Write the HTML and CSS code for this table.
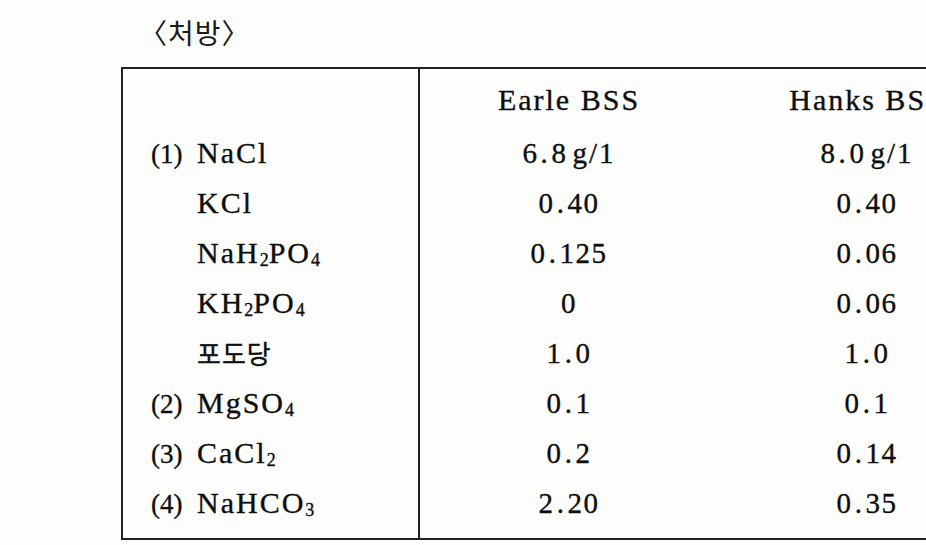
FILE: index.html
```html
<!DOCTYPE html>
<html lang="ko">

<head>
    <meta charset="UTF-8">
    <meta name="viewport" content="width=device-width, initial-scale=1.0">
    <title>처방</title>
    <link rel="stylesheet" href="styles.css">
</head>

<body>
    <div class="page">
        <div class="title">〈처방〉</div>

        <div class="recipe">
            <div class="col names">
                <div class="cell head"></div>
                <div class="cell label"><span class="num">(1)</span><span class="name">NaCl</span></div>
                <div class="cell label"><span class="num"></span><span class="name">KCl</span></div>
                <div class="cell label"><span class="num"></span><span class="name">NaH<sub>2</sub>PO<sub>4</sub></span></div>
                <div class="cell label"><span class="num"></span><span class="name">KH<sub>2</sub>PO<sub>4</sub></span></div>
                <div class="cell label"><span class="num"></span><span class="name ko">포도당</span></div>
                <div class="cell label"><span class="num">(2)</span><span class="name">MgSO<sub>4</sub></span></div>
                <div class="cell label"><span class="num">(3)</span><span class="name">CaCl<sub>2</sub></span></div>
                <div class="cell label"><span class="num">(4)</span><span class="name">NaHCO<sub>3</sub></span></div>
            </div>

            <div class="col values">
                <div class="cell head">Earle BSS</div>
                <div class="cell val">6<span class="dot">.</span>8<span class="unit">g/1</span></div>
                <div class="cell val">0<span class="dot">.</span>40</div>
                <div class="cell val">0<span class="dot">.</span>125</div>
                <div class="cell val">0</div>
                <div class="cell val">1<span class="dot">.</span>0</div>
                <div class="cell val">0<span class="dot">.</span>1</div>
                <div class="cell val">0<span class="dot">.</span>2</div>
                <div class="cell val">2<span class="dot">.</span>20</div>
            </div>

            <div class="col values">
                <div class="cell head">Hanks BSS</div>
                <div class="cell val">8<span class="dot">.</span>0<span class="unit">g/1</span></div>
                <div class="cell val">0<span class="dot">.</span>40</div>
                <div class="cell val">0<span class="dot">.</span>06</div>
                <div class="cell val">0<span class="dot">.</span>06</div>
                <div class="cell val">1<span class="dot">.</span>0</div>
                <div class="cell val">0<span class="dot">.</span>1</div>
                <div class="cell val">0<span class="dot">.</span>14</div>
                <div class="cell val">0<span class="dot">.</span>35</div>
            </div>
        </div>
    </div>
</body>

</html>
```

FILE: styles.css
```css
/* 스캔한 교재 페이지 느낌 */
html,
body {
    margin: 0;
    padding: 0;
    overflow: hidden;
    background: #fdfdfc;
}

body {
    font-family: "Liberation Serif", "Noto Sans CJK KR", serif;
    color: #0e0e0e;
    -webkit-text-stroke: 0.35px #0e0e0e;
}

.page {
    width: 1100px;
    padding-top: 12px;
}

.title {
    font-family: "Noto Sans CJK KR", sans-serif;
    font-size: 28px;
    line-height: 40px;
    margin-left: 139px;
    letter-spacing: 1px;
    color: #1a1a1a;
    -webkit-text-stroke: 0;
}

/* 표 */
.recipe {
    display: grid;
    grid-template-columns: 297px 298px 298px;
    margin-top: 15px;
    margin-left: 121px;
    border-top: 2px solid #222;
    border-left: 2px solid #222;
    border-bottom: 2px solid #222;
    padding: 9px 0 10px;
}

.col {
    display: flex;
    flex-direction: column;
}

.names {
    border-right: 2px solid #222;
    margin-top: -9px;
    margin-bottom: -10px;
    padding: 9px 0 10px;
}

.cell {
    height: 50px;
    line-height: 50px;
    font-size: 30px;
    white-space: nowrap;
}

.label {
    display: flex;
    align-items: baseline;
    padding-left: 28px;
}

.num {
    width: 46px;
    font-size: 27px;
}

.name {
    letter-spacing: 2px;
}

.name sub {
    font-size: 18px;
    letter-spacing: 0;
    vertical-align: -3px;
    line-height: 0;
}

.name.ko {
    font-family: "Noto Sans CJK KR", sans-serif;
    font-size: 26px;
    letter-spacing: 1px;
}

.head {
    line-height: 44px;
    text-align: center;
    letter-spacing: 2px;
}

.val {
    text-align: center;
    font-size: 29px;
    letter-spacing: 1.5px;
}

.dot {
    display: inline-block;
    width: 13px;
    text-align: center;
}

.unit {
    margin-left: 5px;
    letter-spacing: 2px;
}
```
